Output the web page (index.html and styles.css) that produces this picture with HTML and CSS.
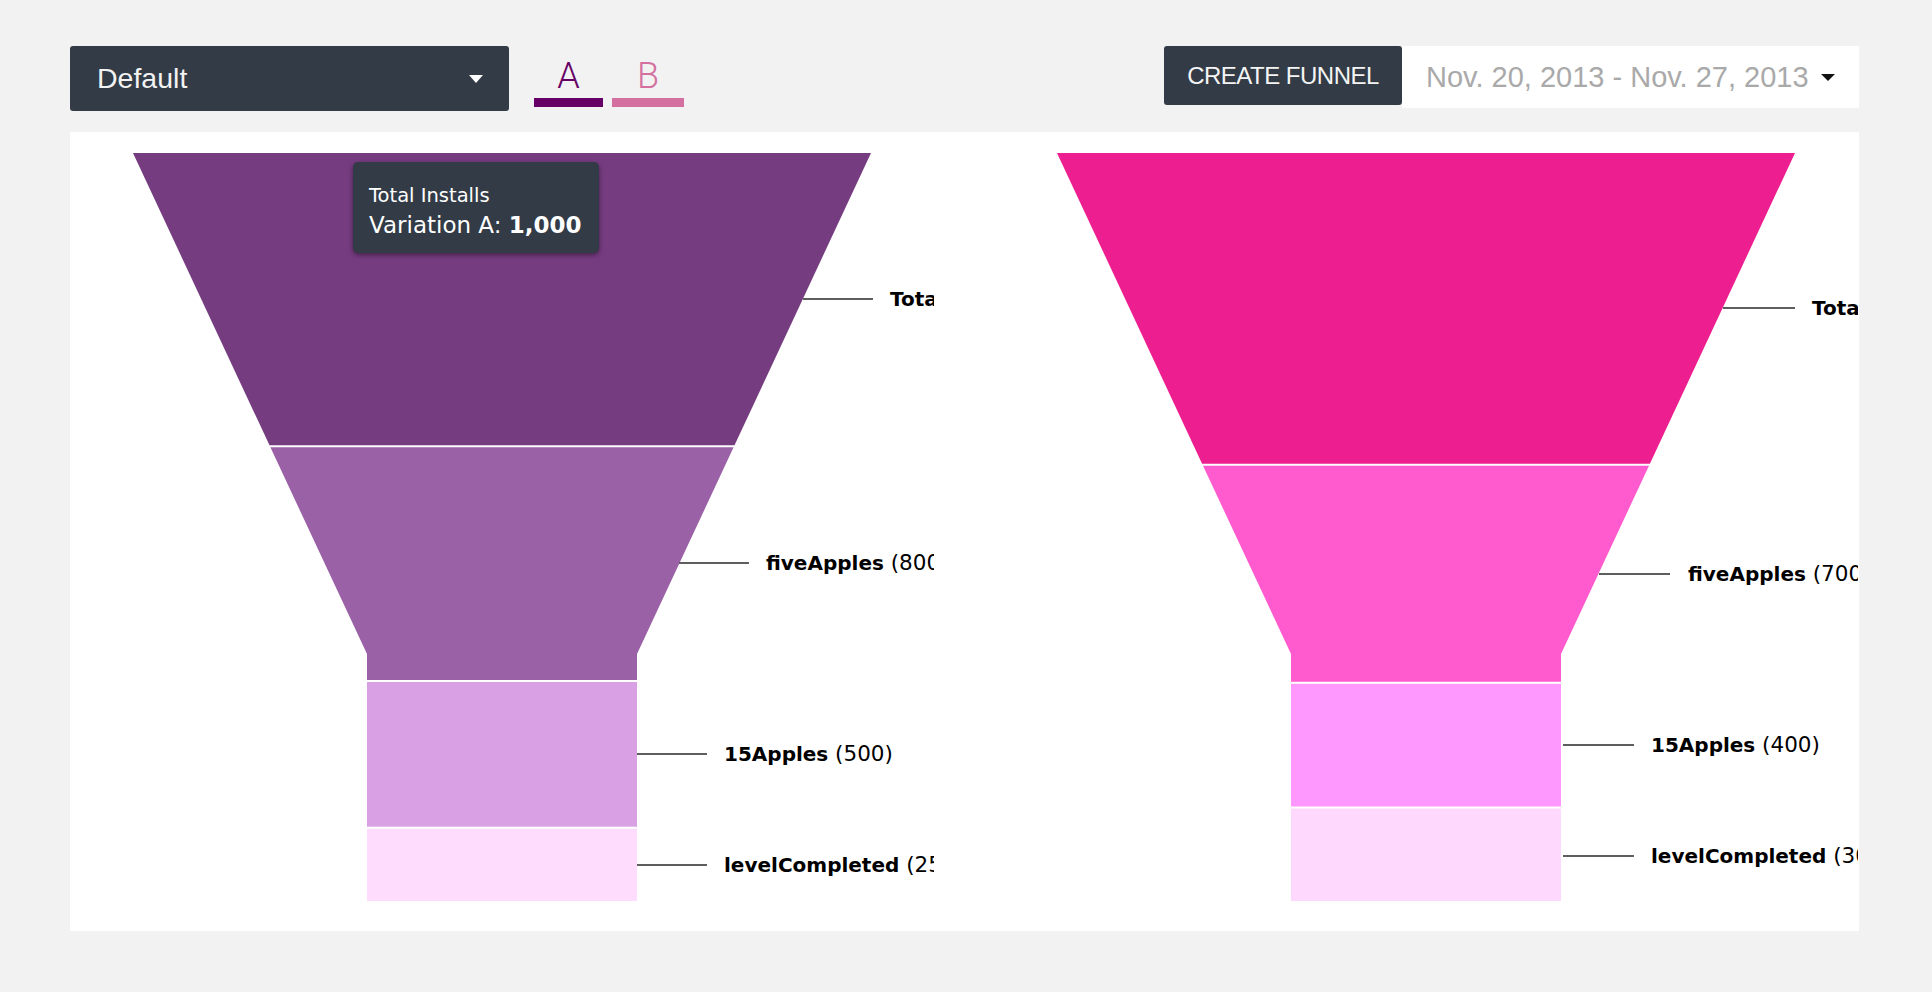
FILE: index.html
```html
<!DOCTYPE html>
<html lang="en">
<head>
<meta charset="utf-8">
<title>Funnel comparison</title>
<link rel="stylesheet" href="styles.css">
</head>
<body>
<div class="page">
  <header class="topbar">
    <div class="left-group">
      <div class="select">
        <span class="select-text">Default</span>
        <svg class="caret" width="14" height="8" viewBox="0 0 14 8"><path d="M0 0H14L7 8Z" fill="#fff"/></svg>
      </div>
      <div class="tabs">
        <div class="tab tab-a"><span class="tab-letter">A</span><span class="tab-bar"></span></div>
        <div class="tab tab-b"><span class="tab-letter">B</span><span class="tab-bar"></span></div>
      </div>
    </div>
    <div class="right-group">
      <button class="btn-create">CREATE FUNNEL</button>
      <div class="date-range">
        <span class="date-text">Nov. 20, 2013 - Nov. 27, 2013</span>
        <svg class="caret" width="14" height="7" viewBox="0 0 14 7"><path d="M0 0H14L7 7Z" fill="#111"/></svg>
      </div>
    </div>
  </header>

  <main class="panel">
    <div class="chart">
      <svg class="funnel" width="864" height="799" viewBox="0 0 864 799">
        <polygon points="63,21 801,21 664.5,313.3 199.5,313.3" fill="#763c80"/>
        <polygon points="200.4,315.3 663.6,315.3 567,522 567,548 297,548 297,522" fill="#9b61a6"/>
        <rect x="297" y="550" width="270" height="144.7" fill="#d9a0e4"/>
        <rect x="297" y="696.7" width="270" height="72.3" fill="#fddcfe"/>

        <line x1="733" y1="167" x2="803" y2="167" class="lead"/>
        <text x="820" y="174" class="lbl"><tspan class="b">Total Installs</tspan><tspan class="r"> (1000)</tspan></text>
        <line x1="609" y1="431" x2="679" y2="431" class="lead"/>
        <text x="696" y="438" class="lbl"><tspan class="b">fiveApples</tspan><tspan class="r"> (800)</tspan></text>
        <line x1="567" y1="622" x2="637" y2="622" class="lead"/>
        <text x="654" y="629" class="lbl"><tspan class="b">15Apples</tspan><tspan class="r"> (500)</tspan></text>
        <line x1="567" y1="733" x2="637" y2="733" class="lead"/>
        <text x="654" y="740" class="lbl"><tspan class="b">levelCompleted</tspan><tspan class="r"> (250)</tspan></text>
      </svg>
      <div class="tooltip">
        <div class="tt-title">Total Installs</div>
        <div class="tt-value">Variation A: <b>1,000</b></div>
      </div>
    </div>
    <div class="chart">
      <svg class="funnel" width="864" height="799" viewBox="0 0 864 799">
        <polygon points="63,21 801,21 655.9,331.7 208.1,331.7" fill="#ed1e8f"/>
        <polygon points="209,333.7 655,333.7 567,522 567,549.8 297,549.8 297,522" fill="#ff5ace"/>
        <rect x="297" y="551.8" width="270" height="122.7" fill="#ff98fe"/>
        <rect x="297" y="676.5" width="270" height="92.5" fill="#ffd9fd"/>

        <line x1="729" y1="176" x2="801" y2="176" class="lead"/>
        <text x="818" y="183" class="lbl"><tspan class="b">Total Installs</tspan><tspan class="r"> (1000)</tspan></text>
        <line x1="605" y1="442" x2="676" y2="442" class="lead"/>
        <text x="694" y="449" class="lbl"><tspan class="b">fiveApples</tspan><tspan class="r"> (700)</tspan></text>
        <line x1="569" y1="613" x2="640" y2="613" class="lead"/>
        <text x="657" y="620" class="lbl"><tspan class="b">15Apples</tspan><tspan class="r"> (400)</tspan></text>
        <line x1="569" y1="724" x2="640" y2="724" class="lead"/>
        <text x="657" y="731" class="lbl"><tspan class="b">levelCompleted</tspan><tspan class="r"> (300)</tspan></text>
      </svg>
    </div>
  </main>
</div>
</body>
</html>
```

FILE: styles.css
```css
html, body {
  margin: 0;
  padding: 0;
  background: #f2f2f2;
}

.page {
  padding: 46px 73px 0 70px;
  font-family: "Liberation Sans", Arial, sans-serif;
}

.topbar {
  display: flex;
  justify-content: space-between;
  align-items: flex-start;
  height: 65px;
  margin-bottom: 21px;
}

.left-group {
  display: flex;
  align-items: flex-start;
  gap: 25px;
}

.select {
  width: 439px;
  height: 65px;
  box-sizing: border-box;
  background: #323b46;
  border-radius: 3px;
  display: flex;
  align-items: center;
  justify-content: space-between;
  padding: 0 26px 0 27px;
}

.select-text {
  color: #f2f2f2;
  font-size: 28.5px;
}

.tabs {
  display: flex;
  gap: 9px;
  margin-top: 12px;
}

.tab {
  display: flex;
  flex-direction: column;
  align-items: center;
}

.tab-a { width: 69px; }
.tab-b { width: 72px; }

.tab-letter {
  font-family: Roboto, "Liberation Sans", sans-serif;
  font-weight: 300;
  font-size: 36px;
  line-height: 36px;
}

.tab-bar {
  display: block;
  width: 100%;
  height: 9px;
  margin-top: 4px;
}

.tab-a .tab-letter { color: #660066; }
.tab-a .tab-bar { background: #660066; }
.tab-b .tab-letter { color: #d4709f; }
.tab-b .tab-bar { background: #d4709f; }

.right-group {
  display: flex;
  align-items: flex-start;
}

.btn-create {
  width: 238px;
  height: 59px;
  border: 0;
  border-radius: 3px;
  background: #323b46;
  color: #f4f4f4;
  font-family: "Liberation Sans", Arial, sans-serif;
  font-size: 24px;
  letter-spacing: -0.5px;
  padding: 0;
}

.date-range {
  width: 457px;
  height: 62px;
  box-sizing: border-box;
  background: #fff;
  display: flex;
  align-items: center;
  justify-content: space-between;
  padding: 0 24px 0 24px;
}

.date-text {
  color: #a9a9a9;
  font-size: 29px;
}

.panel {
  display: flex;
  gap: 60px;
  background: #fff;
  height: 799px;
}

.chart {
  position: relative;
  width: 864px;
  height: 799px;
  overflow: hidden;
  flex: none;
}

.funnel {
  display: block;
}

.lead {
  stroke: #5e5e5e;
  stroke-width: 2;
}

.lbl {
  font-family: "DejaVu Sans", sans-serif;
  font-size: 20px;
  fill: #000;
}

.lbl .b {
  font-weight: bold;
  font-size: 20px;
}

.lbl .r {
  font-size: 21.5px;
}

.tooltip {
  position: absolute;
  left: 283px;
  top: 30px;
  width: 246px;
  height: 91px;
  box-sizing: border-box;
  padding: 21px 0 0 16px;
  background: #323b46;
  border-radius: 5px;
  box-shadow: 0 2px 5px rgba(0, 0, 0, 0.45);
  color: #fff;
  font-family: "DejaVu Sans", sans-serif;
}

.tt-title {
  font-size: 19.5px;
  line-height: 26px;
}

.tt-value {
  font-size: 23px;
  line-height: 32px;
}

.tt-value b {
  font-weight: bold;
}
```
